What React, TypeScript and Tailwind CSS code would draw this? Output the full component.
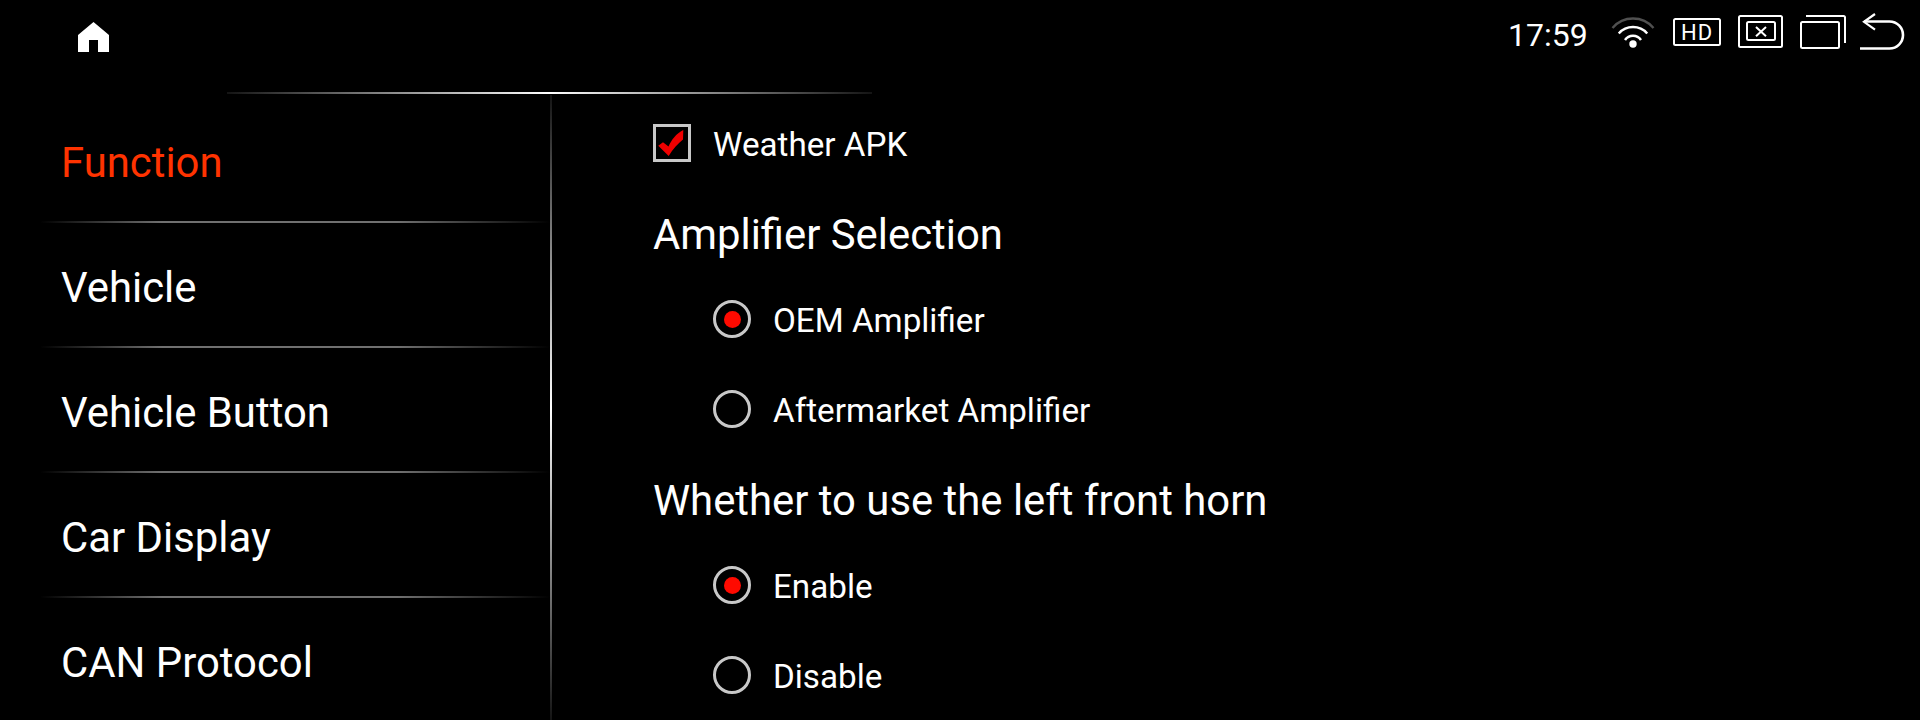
import React from "react";

const menu = ["Function", "Vehicle", "Vehicle Button", "Car Display", "CAN Protocol"];

function StatusIcons() {
  return (
    <svg width="312" height="64" viewBox="1608 0 312 64" fill="none" stroke="#fff" strokeWidth="2">
      <path d="M1612.5 28 A 27 27 0 0 1 1653.5 28" stroke="#505050" strokeWidth="2.4" />
      <path d="M1618.8 33.5 A 19 19 0 0 1 1647.2 33.5" strokeWidth="2.5" />
      <path d="M1625 40 A 9.6 9.6 0 0 1 1641 40" strokeWidth="2.5" />
      <circle cx="1633" cy="44" r="3.7" fill="#fff" stroke="none" />
      <rect x="1674" y="19" width="46" height="26" rx="1.5" />
      <text
        x="1681"
        y="40"
        fontSize="22"
        letterSpacing="1"
        fill="#fff"
        stroke="none"
        className="font-[Roboto,sans-serif] font-normal"
      >
        HD
      </text>
      <rect x="1739" y="16" width="43" height="31" rx="1.5" />
      <rect x="1747" y="22" width="28" height="18" rx="1.5" />
      <path d="M1756 27 L1766 36.3 M1766 27 L1756 36.3" />
      <rect x="1801" y="22" width="38" height="26" rx="1.5" />
      <path d="M1806 16 H1843.5 Q1845 16 1845 17.5 V43" />
      <path d="M1860 48.5 H1889.5 A13.5 13.5 0 0 0 1889.5 21.5 H1864" strokeWidth="2.6" />
      <path d="M1875 14 L1864 21.8 L1875 29.6" strokeWidth="2.2" />
    </svg>
  );
}

function Heading({ children }: { children: React.ReactNode }) {
  return <h2 className="flex h-[86px] items-center pt-[7px] text-[41.85px] leading-[42px]">{children}</h2>;
}

function Radio({ label, on = false }: { label: string; on?: boolean }) {
  return (
    <div className="flex h-[90px] items-center gap-[22px] pl-[60px]">
      <span className="flex size-[38px] items-center justify-center rounded-full border-3 border-[#c8c8c8]">
        {on && <span className="size-[17px] rounded-full bg-[#ff0a00]" />}
      </span>
      <span className="pt-[3px] text-[33.2px] leading-[33px]">{label}</span>
    </div>
  );
}

export default function App() {
  return (
    <div className="flex h-[720px] w-[1920px] flex-col overflow-hidden bg-black font-[Roboto,sans-serif] text-white">
      <header className="flex h-[92px] shrink-0 items-start justify-between">
        <svg className="ml-[78px] mt-[22px]" width="31" height="30" viewBox="0 0 31 30" fill="#fff">
          <path d="M15.5 0 L31 13 V30 H20 V18 H11 V30 H0 V13 Z" />
        </svg>
        <div className="flex">
          <span className="w-[100px] pt-[18px] text-[32px] leading-[34px]">17:59</span>
          <StatusIcons />
        </div>
      </header>
      <div className="ml-[227px] h-[2px] w-[645px] shrink-0 bg-[linear-gradient(90deg,#141414,#fff_50%,#141414)]" />
      <div className="flex min-h-0 flex-1 pt-px">
        <nav className="w-[550px] pt-[3px]">
          {menu.map((item, i) => (
            <div key={item} className="h-[125px]">
              <div
                className={
                  "flex h-[123px] items-center pl-[61px] pt-[6px] text-[41.85px] leading-[42px] " +
                  (i === 0 ? "text-[#ff3300]" : "text-white")
                }
              >
                {item}
              </div>
              {i < menu.length - 1 && (
                <div className="ml-[40px] h-[2px] w-[510px] bg-[linear-gradient(90deg,#000,#707070_24%,#707070_70%,#000)]" />
              )}
            </div>
          ))}
        </nav>
        <div className="w-[2px] bg-[linear-gradient(180deg,#141414,#fff_50%,#141414)]" />
        <main className="flex-1 pl-[101px] pt-[3px]">
          <div className="flex h-[90px] items-center gap-[22px]">
            <span className="size-[38px] border-3 border-[#c8c8c8]">
              <svg width="32" height="32" viewBox="0 0 32 32" fill="#f00000">
                <path d="M2.3 18.7 L7 15.2 L12.5 19.5 C15.5 13 20 6.5 27.3 3 L27 12.5 C21.5 17 17 22 12.7 29 Z" />
              </svg>
            </span>
            <span className="pt-[3px] text-[33.2px] leading-[33px]">Weather APK</span>
          </div>
          <Heading>Amplifier Selection</Heading>
          <Radio label="OEM Amplifier" on />
          <Radio label="Aftermarket Amplifier" />
          <Heading>Whether to use the left front horn</Heading>
          <Radio label="Enable" on />
          <Radio label="Disable" />
        </main>
      </div>
    </div>
  );
}
